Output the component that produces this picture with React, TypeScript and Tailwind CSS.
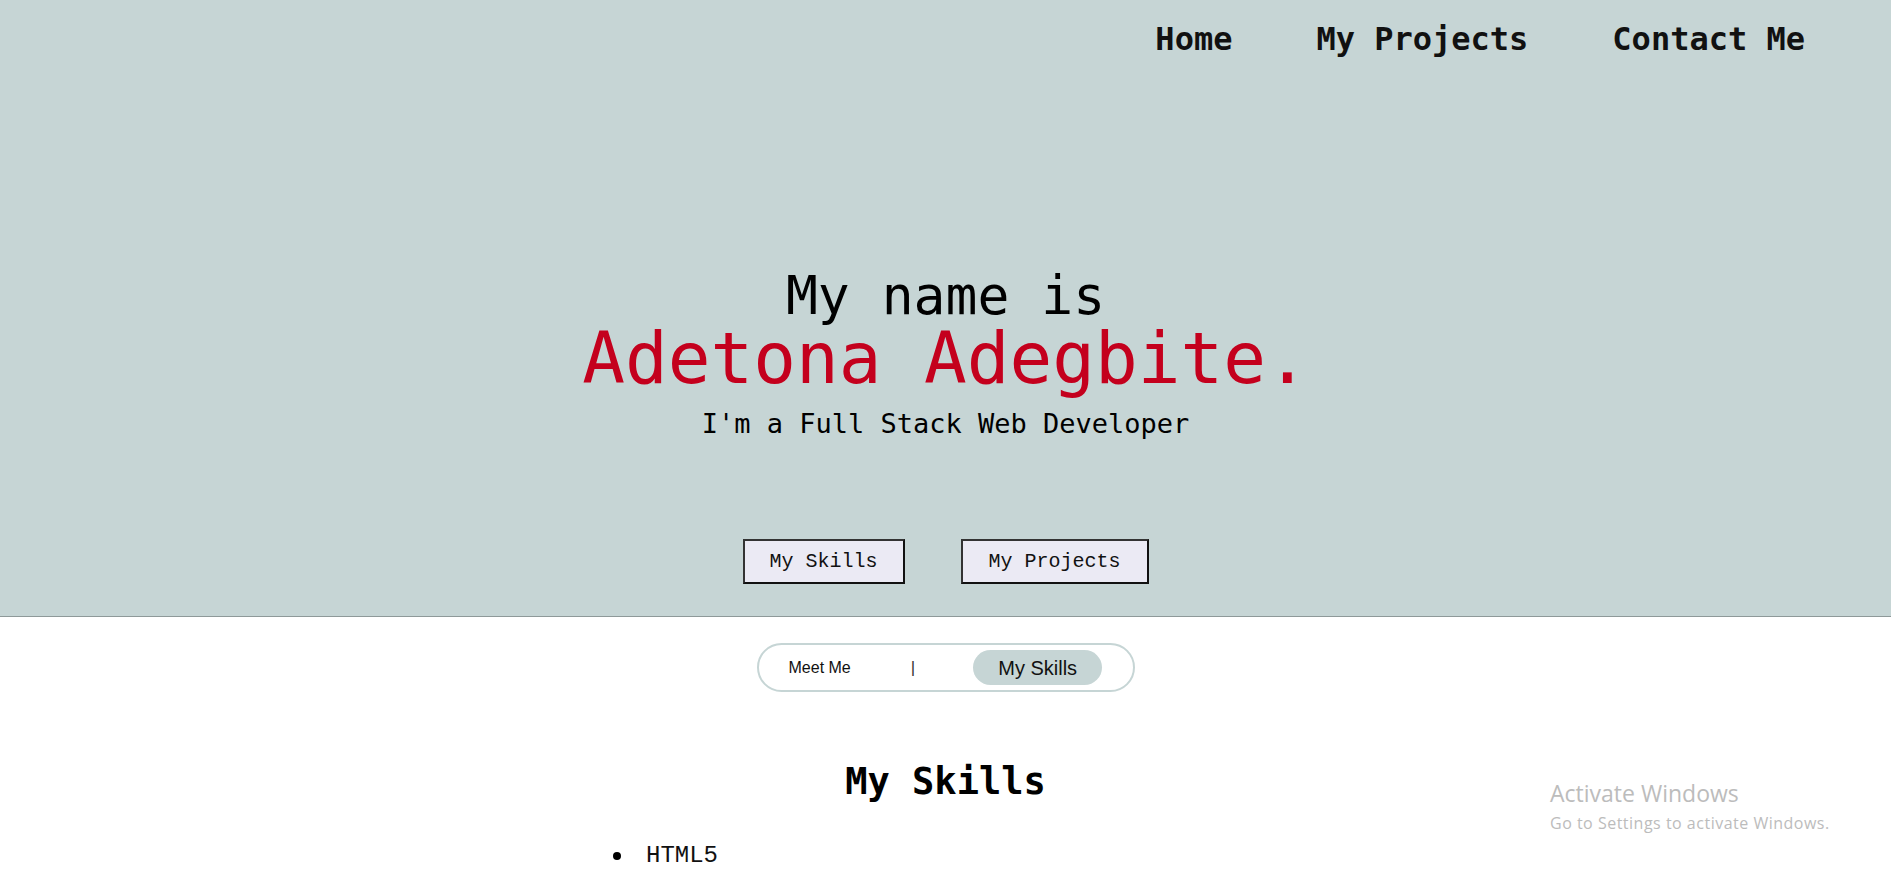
import React from "react";

const mono = "font-['DejaVu_Sans_Mono',monospace]";
const lmono = "font-['Liberation_Mono',monospace]";
const sans = "font-['Liberation_Sans',Arial,sans-serif]";

export default function App() {
  return (
    <div className="relative min-h-[870px] w-full bg-white text-[#111]">
      <header className="flex h-[617px] flex-col border-b border-[#8e9999] bg-[#c6d5d5]">
        <nav className={`flex justify-end gap-[84px] pr-[86px] pt-[23px] ${mono}`}>
          <a className="text-[32px] font-bold leading-[32px] text-[#111]">Home</a>
          <a className="text-[32px] font-bold leading-[32px] text-[#111]">My Projects</a>
          <a className="text-[32px] font-bold leading-[32px] text-[#111]">Contact Me</a>
        </nav>
        <div className={`mt-[214px] flex flex-col items-center ${mono}`}>
          <h2 className="text-[53px] leading-[53px] text-black">My name is</h2>
          <h1 className="mt-[1px] text-[71px] leading-[71px] text-[#c4001d]">Adetona Adegbite.</h1>
          <p className="mt-[16px] text-[27px] leading-[27px] text-black">I'm a Full Stack Web Developer</p>
        </div>
        <div className={`mt-[102px] flex justify-center gap-[56px] ${lmono}`}>
          <button className="flex h-[45px] w-[162px] items-center justify-center border-2 border-[#333] border-b-[#111] border-r-[#111] bg-[#ebeaf4] text-[20px] leading-[40px] text-[#111]">
            My Skills
          </button>
          <button className="flex h-[45px] w-[188px] items-center justify-center border-2 border-[#333] border-b-[#111] border-r-[#111] bg-[#ebeaf4] text-[20px] leading-[40px] text-[#111]">
            My Projects
          </button>
        </div>
      </header>

      <main className="flex flex-col items-center">
        <div className={`mt-[26px] flex h-[49px] w-[378px] items-center rounded-full border-2 border-[#c6d5d5] pl-[30px] ${sans}`}>
          <span className="text-[16px] leading-[16px] text-[#111]">Meet Me</span>
          <span className="ml-[60px] text-[17px] leading-[17px] text-[#333]">|</span>
          <span className="ml-[58px] flex h-[35px] w-[129px] items-center justify-center rounded-full bg-[#c6d5d5] text-[20px] leading-[20px] text-[#111]">
            My Skills
          </span>
        </div>

        <h3 className={`mt-[71px] text-[37px] font-bold leading-[37px] text-black ${mono}`}>My Skills</h3>

        <ul className="mt-[44px] w-full">
          <li className={`flex items-center pl-[613px] ${lmono}`}>
            <span className="h-[8px] w-[8px] rounded-full bg-black" />
            <span className="ml-[25px] text-[24px] leading-[24px] text-[#111]">HTML5</span>
          </li>
        </ul>
      </main>

      <div className="pointer-events-none absolute left-[1550px] top-[782px] font-['Open_Sans',sans-serif] text-[#bcbcbc]">
        <div className="text-[23px] leading-[23px]">Activate Windows</div>
        <div className="mt-[10px] text-[16px] leading-[16px] tracking-[0.5px]">Go to Settings to activate Windows.</div>
      </div>
    </div>
  );
}
